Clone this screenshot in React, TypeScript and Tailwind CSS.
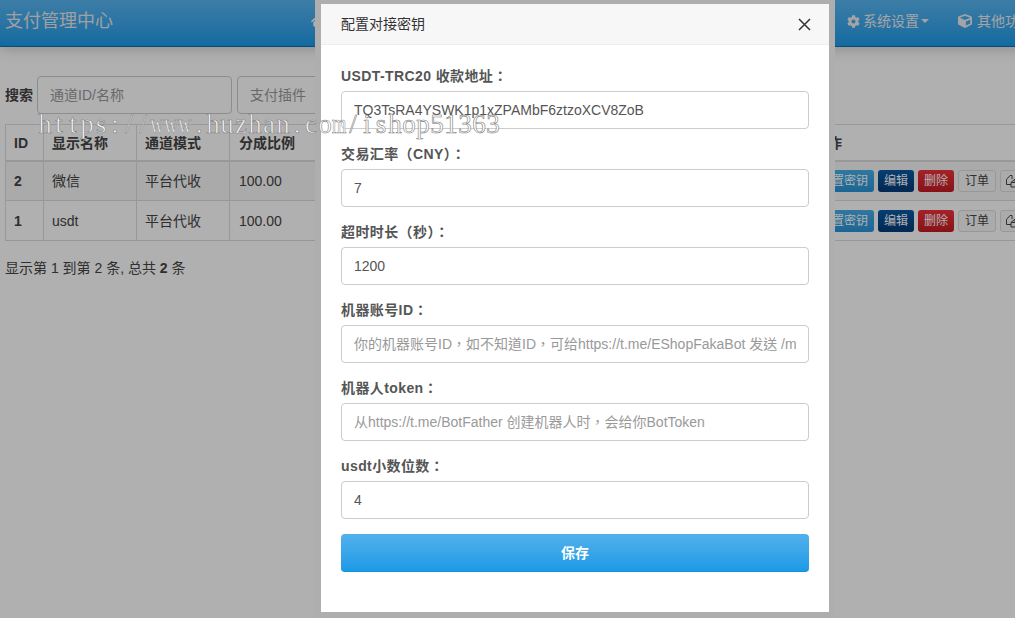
import { FaCog, FaCube, FaHome } from 'react-icons/fa'

const rows = [
  { id: 2, name: '微信', striped: true },
  { id: 1, name: 'usdt', striped: false },
]

const fields = [
  { label: 'USDT-TRC20 收款地址：', value: 'TQ3TsRA4YSWK1p1xZPAMbF6ztzoXCV8ZoB' },
  { label: '交易汇率（CNY）：', value: '7' },
  { label: '超时时长（秒）：', value: '1200' },
  { label: '机器账号ID：', placeholder: '你的机器账号ID，如不知道ID，可给https://t.me/EShopFakaBot 发送 /my_id 获取' },
  { label: '机器人token：', placeholder: '从https://t.me/BotFather 创建机器人时，会给你BotToken' },
  { label: 'usdt小数位数：', value: '4' },
]

const watermark = 'https://www.huzhan.com/ishop51363'.split('')

function Header() {
  return (
    <header className="h-[47px] w-[1200px] pb-1 flex items-center text-white border-b border-[#0f6ea8] bg-gradient-to-b from-[#58b6f2] to-[#189ae8] shadow-[0_3px_12px_rgba(0,0,0,0.18)]">
      <div className="w-[306px] pl-[5px] text-lg text-[#e8e8e8]">支付管理中心</div>
      <div className="w-[541px] pl-[5px] text-sm">
        <FaHome className="w-[14px] h-[14px]" />
      </div>
      <div className="w-[111px] flex items-center text-sm text-[#eeeeee]">
        <FaCog className="w-[13px] h-[13px] mr-[3px]" />
        <span>系统设置</span>
        <span className="ml-0.5 border-x-4 border-x-transparent border-t-4 border-t-[#eeeeee]" />
      </div>
      <div className="flex items-center text-sm text-[#eeeeee]">
        <FaCube className="w-[14px] h-[14px] mr-[5px]" />
        <span>其他功能</span>
      </div>
    </header>
  )
}

function Search() {
  return (
    <div className="flex items-center h-[38px] mt-[29px] mb-[10px] pl-[5px]">
      <span className="font-bold text-sm text-[#444] mr-[4px]">搜索</span>
      <input readOnly placeholder="通道ID/名称" className="w-[195px] h-[38px] px-3 mr-[5px] text-sm border border-[#ccc] rounded bg-white placeholder:text-[#999]" />
      <input readOnly placeholder="支付插件" className="w-[195px] h-[38px] px-3 text-sm border border-[#ccc] rounded bg-white placeholder:text-[#999]" />
    </div>
  )
}

function Btn({ className, children }: { className: string; children: React.ReactNode }) {
  return <span className={`inline-flex items-center justify-center h-[22px] rounded-[3px] text-xs ${className}`}>{children}</span>
}

function FilesIcon() {
  return (
    <svg width="14" height="14" viewBox="0 0 14 14" fill="none" stroke="#444" strokeWidth="1" className="mr-1 shrink-0">
      <path d="M7 5V1.5H5L1.5 5.5V10.5H6" />
      <path d="M10 5H13V13H6V8.5ZM10 5V8.5H6" />
    </svg>
  )
}

function Table() {
  return (
    <div className="ml-[5px] w-[1195px]">
      <table className="w-full table-fixed border-collapse text-sm text-[#444] border border-[#ddd]">
        <colgroup>
          <col className="w-[38px]" />
          <col className="w-[93px]" />
          <col className="w-[93px]" />
          <col className="w-[576px]" />
          <col />
        </colgroup>
        <thead>
          <tr className="h-[36px] border-b-2 border-[#ddd] text-left">
            <th className="px-2 pt-px border-r border-[#ddd]">ID</th>
            <th className="px-2 pt-px border-r border-[#ddd]">显示名称</th>
            <th className="px-2 pt-px border-r border-[#ddd]">通道模式</th>
            <th className="pl-[9px] pr-2 pt-px border-r border-[#ddd]">分成比例</th>
            <th className="px-2 pt-px">操作</th>
          </tr>
        </thead>
        <tbody>
          {rows.map((r) => (
            <tr key={r.id} className={`h-10 border-b border-[#ddd] ${r.striped ? 'bg-[#f6f6f6]' : ''}`}>
              <td className="px-2 font-bold border-r border-[#ddd]">{r.id}</td>
              <td className="px-2 border-r border-[#ddd]">{r.name}</td>
              <td className="px-2 border-r border-[#ddd]">平台代收</td>
              <td className="pl-[9px] pr-2 border-r border-[#ddd]">100.00</td>
              <td className="px-2">
                <div className="flex gap-1">
                  <Btn className="px-[6px] text-white bg-gradient-to-b from-[#45aee8] to-[#2a93d6]">配置密钥</Btn>
                  <Btn className="px-[6px] text-white bg-gradient-to-b from-[#0a5aa6] to-[#043a78]">编辑</Btn>
                  <Btn className="px-[6px] text-white bg-gradient-to-b from-[#f2303c] to-[#c41a24]">删除</Btn>
                  <Btn className="px-[6px] text-[#444] bg-[#f8f8f8] border border-[#ddd]">订单</Btn>
                  <Btn className="px-1 text-[#444] bg-[#f8f8f8] border border-[#ddd]">
                    <FilesIcon />
                    复制
                  </Btn>
                </div>
              </td>
            </tr>
          ))}
        </tbody>
      </table>
      <p className="mt-[17px] text-sm text-[#444]">
        显示第 1 到第 2 条, 总共 <b>2</b> 条
      </p>
    </div>
  )
}

function Modal() {
  return (
    <div className="absolute left-[315px] top-[-2px] w-[520px] h-[620px] border-[6px] border-[#aeaeae] bg-white font-['Liberation_Sans','Noto_Sans_CJK_TC',sans-serif]">
      <div className="h-[41px] flex items-center justify-between pl-5 pr-[18px] bg-[#f7f7f7] border-b border-[#eeeeee]">
        <span className="text-sm text-[#333]">配置对接密钥</span>
        <svg width="13" height="13" viewBox="0 0 13 13" fill="none" stroke="#333" strokeWidth="1.5">
          <path d="M1 1l11 11M12 1L1 12" />
        </svg>
      </div>
      <form className="px-5 pt-[21px]">
        {fields.map((f) => (
          <div key={f.label} className="mb-[15px]">
            <label className="block h-[25px] leading-5 text-sm font-bold text-[#555] tracking-[0.4px]">{f.label}</label>
            <input
              readOnly
              value={f.value}
              placeholder={f.placeholder}
              className="block w-full h-[38px] px-3 text-sm text-[#555] border border-[#ccc] rounded bg-white placeholder:text-[#999]"
            />
          </div>
        ))}
        <button type="button" className="block w-full h-[38px] text-sm font-bold text-white rounded border-b border-[#1a8fd6] bg-gradient-to-b from-[#50b1ec] to-[#1a9ae6]">
          保存
        </button>
      </form>
    </div>
  )
}

export default function App() {
  return (
    <div className="relative w-[1015px] h-[618px] overflow-hidden bg-white font-['Liberation_Sans','Noto_Sans_CJK_SC',sans-serif]">
      <Header />
      <Search />
      <Table />
      <div className="absolute inset-0 bg-black/[.31]" />
      <Modal />
      <div className="absolute left-[38px] top-[108px] flex font-['Liberation_Serif',serif] text-[27px] leading-[32px] text-white/85 [-webkit-text-stroke:0.6px_#808080]">
        {watermark.map((ch, i) => (
          <span key={i} className={`w-[14px] flex justify-center ${ch === 'w' || ch === 'm' ? 'scale-x-[0.7]' : ''}`}>
            {ch}
          </span>
        ))}
      </div>
    </div>
  )
}
